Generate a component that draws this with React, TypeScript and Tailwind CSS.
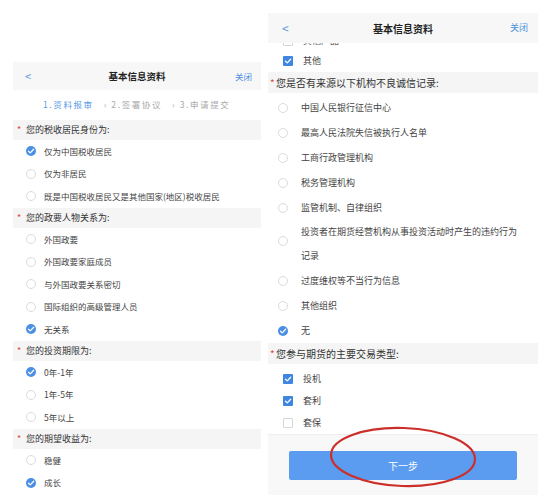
import React from "react";

const FONT = { fontFamily: '"Noto Sans CJK SC", "Noto Sans", sans-serif' };

function Check({ size }: { size: number }) {
  return (
    <svg width={size} height={size} viewBox="0 0 12 12">
      <path d="M3 6.3 L5.1 8.3 L9.2 3.9" fill="none" stroke="white" strokeWidth="1.5" strokeLinecap="round" strokeLinejoin="round" />
    </svg>
  );
}

function Radio({ on }: { on?: boolean }) {
  return on ? (
    <span className="flex h-[10px] w-[10px] shrink-0 items-center justify-center rounded-full bg-[#4a8fe4]">
      <Check size={10} />
    </span>
  ) : (
    <span className="block h-[10px] w-[10px] shrink-0 rounded-full border border-[#dcdcdc] bg-white" />
  );
}

function Box({ on }: { on?: boolean }) {
  return on ? (
    <span className="flex h-[10px] w-[10px] shrink-0 items-center justify-center rounded-[1px] bg-[#3f86e0]">
      <Check size={10} />
    </span>
  ) : (
    <span className="block h-[10px] w-[10px] shrink-0 rounded-[1px] border border-[#d6d6d6] bg-white" />
  );
}

function LHead({ text }: { text: string }) {
  return (
    <div className="flex h-[20.5px] items-center bg-[#f5f5f5] text-[9px] text-[#333]">
      <span className="w-[13px] pl-[4px] text-[#e0463c]">*</span>
      <span>{text}</span>
    </div>
  );
}

function LItem({ text, on }: { text: string; on?: boolean }) {
  return (
    <div className="flex h-[22.5px] items-center text-[8.5px] text-[#444]">
      <span className="flex w-[30px] justify-center pl-[6px]">
        <Radio on={on} />
      </span>
      <span className="pl-[1px]">{text}</span>
    </div>
  );
}

function RHead({ text }: { text: string }) {
  return (
    <div className="flex h-[21px] items-center bg-[#f5f5f5] text-[10px] text-[#333]">
      <span className="w-[8px] pl-[2px] text-[#e0463c]">*</span>
      <span>{text}</span>
    </div>
  );
}

function RItem({ text, on }: { text: string; on?: boolean }) {
  return (
    <div className="flex h-[25px] items-center text-[9px] text-[#444]">
      <span className="flex w-[33px] justify-center pr-[4px]">
        <Radio on={on} />
      </span>
      <span>{text}</span>
    </div>
  );
}

function RBox({ text, on, h }: { text: string; on?: boolean; h: string }) {
  return (
    <div className={`flex ${h} items-center text-[9px] text-[#444]`}>
      <span className="flex w-[35px] justify-start pl-[15px]">
        <Box on={on} />
      </span>
      <span>{text}</span>
    </div>
  );
}

export default function App() {
  return (
    <div className="relative flex h-[503px] w-[553px] overflow-hidden bg-white" style={FONT}>
      {/* Left phone */}
      <div className="ml-[13px] mt-[62px] flex w-[248px] flex-col bg-white">
        <div className="flex h-[28px] items-center justify-between bg-[#f7f7f7] px-[9px]">
          <span className="w-[30px] pl-[3px] text-[11px] text-[#5a95e0]">&lt;</span>
          <span className="text-[9.5px] font-semibold text-[#222]">基本信息资料</span>
          <span className="w-[30px] text-right text-[8.5px] text-[#4a8fe0]">关闭</span>
        </div>
        <div className="flex h-[29.5px] items-center pl-[30px] text-[8.5px] tracking-[1.6px] text-[#aaa]">
          <span className="text-[#5b9be6]">1.资料报审</span>
          <span className="ml-[10px]">› 2.签署协议</span>
          <span className="ml-[10px]">› 3.申请提交</span>
        </div>
        <LHead text="您的税收居民身份为:" />
        <LItem text="仅为中国税收居民" on />
        <LItem text="仅为非居民" />
        <LItem text="既是中国税收居民又是其他国家(地区)税收居民" />
        <LHead text="您的政要人物关系为:" />
        <LItem text="外国政要" />
        <LItem text="外国政要家庭成员" />
        <LItem text="与外国政要关系密切" />
        <LItem text="国际组织的高级管理人员" />
        <LItem text="无关系" on />
        <LHead text="您的投资期限为:" />
        <LItem text="0年-1年" on />
        <LItem text="1年-5年" />
        <LItem text="5年以上" />
        <LHead text="您的期望收益为:" />
        <LItem text="稳健" />
        <LItem text="成长" on />
      </div>

      {/* Right phone */}
      <div className="ml-[7px] mt-[13px] flex h-[482px] w-[270px] flex-col bg-white">
        <div className="flex h-[30px] shrink-0 items-center justify-between bg-[#f7f7f7] px-[10px]">
          <span className="w-[30px] pl-[4px] text-[12px] text-[#5a95e0]">&lt;</span>
          <span className="text-[10px] font-semibold text-[#222]">基本信息资料</span>
          <span className="w-[30px] text-right text-[9px] text-[#4a8fe0]">关闭</span>
        </div>
        <div className="relative h-[6px] shrink-0 overflow-hidden">
          <div className="absolute left-0 top-[-9px] flex h-[14px] items-center text-[9px] text-[#666]">
            <span className="flex w-[35px] pl-[15px]">
              <Box />
            </span>
            <span>其他产品</span>
          </div>
        </div>
        <RBox text="其他" on h="h-[23px]" />
        <RHead text="您是否有来源以下机构不良诚信记录:" />
        <div className="pt-[2px]">
          <RItem text="中国人民银行征信中心" />
          <RItem text="最高人民法院失信被执行人名单" />
          <RItem text="工商行政管理机构" />
          <RItem text="税务管理机构" />
          <RItem text="监管机制、自律组织" />
          <div className="flex h-[48px] items-center text-[9px] text-[#444]">
            <span className="flex w-[33px] justify-center pr-[4px] pb-[6px]">
              <Radio />
            </span>
            <span className="leading-[24px]">
              投资者在期货经营机构从事投资活动时产生的违约行为
              <br />
              记录
            </span>
          </div>
          <RItem text="过度维权等不当行为信息" />
          <RItem text="其他组织" />
          <RItem text="无" on />
        </div>
        <RHead text="您参与期货的主要交易类型:" />
        <div className="pt-[4px]">
          <RBox text="投机" on h="h-[22px]" />
          <RBox text="套利" on h="h-[22px]" />
          <RBox text="套保" h="h-[22px]" />
        </div>
        <div className="flex flex-1 flex-col border-t border-[#eeeeee] bg-[#f8f8f8] px-[21px] pt-[16px]">
          <div className="flex h-[29px] items-center justify-center rounded-[2px] bg-[#5b9cf0] text-[10px] text-white">
            下一步
          </div>
        </div>
      </div>

      {/* red annotation */}
      <svg className="pointer-events-none absolute left-[328px] top-[425px]" width="150" height="64" viewBox="0 0 150 64">
        <ellipse cx="75" cy="32" rx="72" ry="29" fill="none" stroke="#cc2f2a" strokeWidth="2.2" transform="rotate(2 75 32)" />
      </svg>
    </div>
  );
}
